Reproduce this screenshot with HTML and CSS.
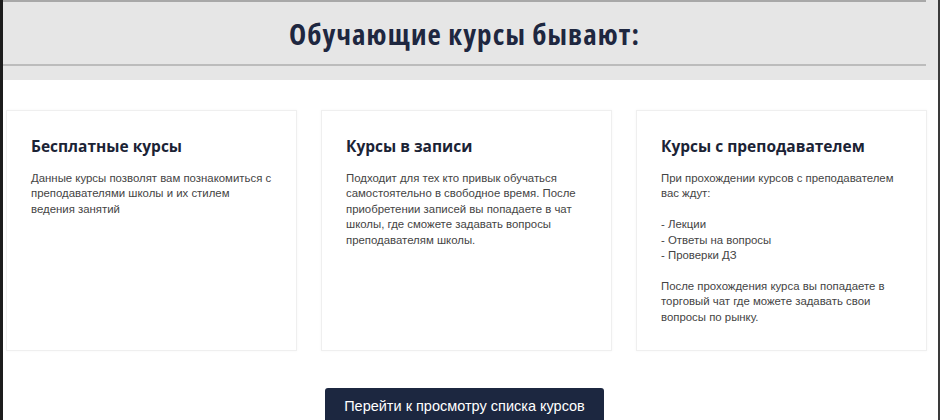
FILE: index.html
```html
<!DOCTYPE html>
<html lang="ru">
<head>
<meta charset="utf-8">
<link rel="stylesheet" href="styles.css">
</head>
<body>
<div class="frame">
  <header class="header">
    <div class="rule rule-top"></div>
    <h1 class="title">Обучающие курсы бывают:</h1>
    <div class="rule"></div>
  </header>
  <main class="main">
    <section class="cards">
      <article class="card">
        <h2 class="card-title">Бесплатные курсы</h2>
        <p class="card-text">Данные курсы позволят вам познакомиться с преподавателями школы и их стилем ведения занятий</p>
      </article>
      <article class="card">
        <h2 class="card-title">Курсы в записи</h2>
        <p class="card-text">Подходит для тех кто привык обучаться самостоятельно в свободное время. После приобретении записей вы попадаете в чат школы, где сможете задавать вопросы преподавателям школы.</p>
      </article>
      <article class="card">
        <h2 class="card-title">Курсы с преподавателем</h2>
        <p class="card-text">При прохождении курсов с преподавателем вас ждут:<br><br>- Лекции<br>- Ответы на вопросы<br>- Проверки ДЗ<br><br>После прохождения курса вы попадаете в торговый чат где можете задавать свои вопросы по рынку.</p>
      </article>
    </section>
    <div class="actions">
      <button class="btn">Перейти к просмотру списка курсов</button>
    </div>
  </main>
</div>
</body>
</html>
```
FILE: styles.css
```css
html, body {
  margin: 0;
  padding: 0;
  background: #ffffff;
  height: 420px;
  overflow: hidden;
}
.frame {
  box-sizing: border-box;
  height: 420px;
  border-left: 3px solid #1c1c1c;
  border-right: 2px solid #3a3a3a;
  font-family: "Liberation Sans", Arial, sans-serif;
}
.header {
  background: #e6e6e6;
  height: 80px;
  padding-right: 12px;
  box-sizing: border-box;
}
.rule {
  height: 2px;
  background: #bcbcbc;
}
.rule-top {
  background: #a8a8a8;
}
.title {
  margin: 0;
  height: 62px;
  display: flex;
  align-items: center;
  justify-content: center;
  font-family: "Open Sans", sans-serif;
  font-stretch: 75%;
  font-weight: 700;
  font-size: 29px;
  letter-spacing: 1.1px;
  color: #1e2740;
}
.main {
  padding-right: 12px;
}
.cards {
  display: grid;
  grid-template-columns: repeat(3, 291px);
  column-gap: 24px;
  margin: 30px 0 0 3px;
}
.card {
  box-sizing: border-box;
  height: 241px;
  background: #ffffff;
  border: 1px solid #efefef;
  box-shadow: 0 0 3px rgba(0, 0, 0, 0.04);
  padding: 25px 21px 0 24px;
}
.card-title {
  margin: 0;
  font-family: "Open Sans", sans-serif;
  font-weight: 700;
  font-size: 15.5px;
  line-height: 20px;
  color: #1b2335;
}
.card-text {
  margin: 15px 0 0 0;
  font-size: 11.4px;
  line-height: 15.4px;
  color: #444444;
}
.actions {
  display: flex;
  justify-content: center;
  margin-top: 37px;
}
.btn {
  width: 279px;
  height: 40px;
  border: none;
  border-radius: 3px;
  background: #1c2740;
  color: #ffffff;
  font-family: "Liberation Sans", Arial, sans-serif;
  font-size: 14.5px;
  padding: 0 0 4px 0;
  cursor: pointer;
}
```
